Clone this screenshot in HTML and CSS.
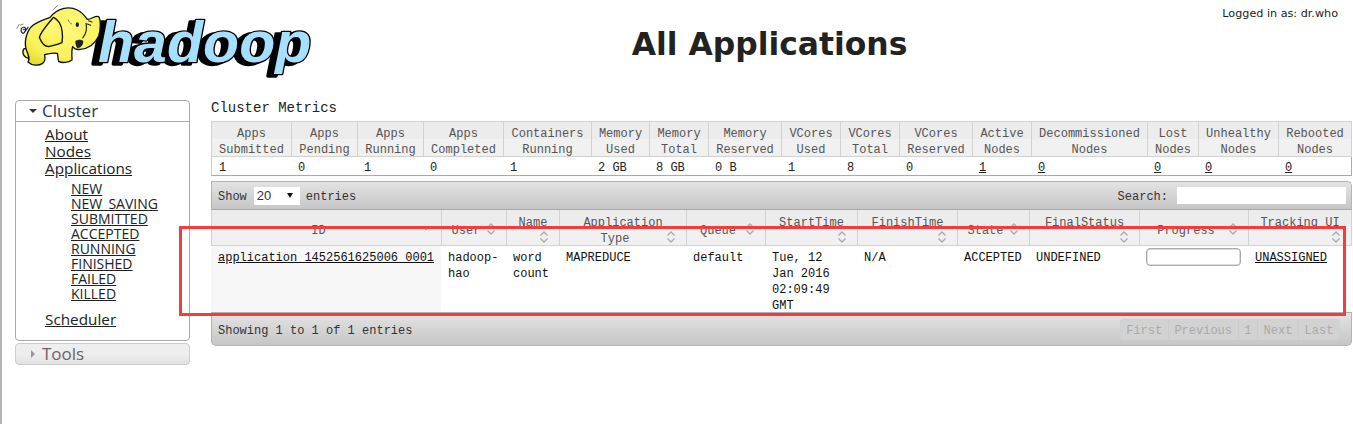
FILE: index.html
```html
<!DOCTYPE html>
<html lang="en">
<head>
<meta charset="utf-8">
<title>All Applications</title>
<link rel="stylesheet" href="styles.css">
</head>
<body>
<header class="top">
  <svg class="logo" viewBox="0 0 1020 270" aria-label="hadoop logo">
    <defs>
      <radialGradient id="skin" cx="0.55" cy="0.35" r="0.75">
        <stop offset="0" stop-color="#fdf97a"/>
        <stop offset="0.7" stop-color="#f8f25a"/>
        <stop offset="1" stop-color="#e4dc2e"/>
      </radialGradient>
    </defs>
    <text class="word-shadow" x="276" y="192" textLength="640" lengthAdjust="spacingAndGlyphs">hadoop</text>
    <text class="word" x="294" y="186" textLength="640" lengthAdjust="spacingAndGlyphs">hadoop</text>
    <path class="ele" d="M72 146C66 154 68 166 78 172C86 176 92 174 94 168L88 146Z"/>
    <path class="ele" d="M150 52C172 26 205 16 232 30C248 38 256 50 262 58C275 58 285 46 296 50C303 60 302 90 296 108C286 130 268 146 240 148C228 150 222 146 218 140C214 150 216 170 216 180C205 188 186 190 176 184C174 176 174 170 172 160C160 158 146 160 134 164C136 176 134 186 128 190C116 198 96 198 84 186C90 176 86 166 80 152C72 134 76 100 94 80C108 66 130 60 150 52Z"/>
    <path class="ele" d="M160 52C144 72 122 96 118 112C124 128 134 140 146 140C162 136 178 132 186 128C190 108 186 80 178 68C172 60 166 54 160 52Z"/>
    <path class="line" d="M84 82C76 94 70 104 66 98C60 90 64 80 74 82C80 86 74 92 70 88"/>
    <path class="thin" d="M50 86L58 72M60 76L70 72M160 28L174 16M204 58C206 66 210 70 216 72"/>
    <path class="line" d="M258 70C262 86 256 104 248 114M266 62L276 66M262 72L272 76"/>
    <path class="mouth" d="M226 124C232 118 246 118 250 124C250 136 240 146 232 144C228 140 226 132 226 124Z"/>
    <ellipse class="eye" cx="232" cy="74" rx="5" ry="7"/>
  </svg>
  <h1 class="title">All Applications</h1>
  <div class="login">Logged in as: dr.who</div>
</header>

<div class="page">
  <nav class="side">
    <section class="panel">
      <h3 class="panel-head"><span class="arrow-down"></span>Cluster</h3>
      <ul class="links">
        <li><a href="#">About</a></li>
        <li><a href="#">Nodes</a></li>
        <li><a href="#">Applications</a>
          <ul class="sublinks">
            <li><a href="#">NEW</a></li>
            <li><a href="#">NEW_SAVING</a></li>
            <li><a href="#">SUBMITTED</a></li>
            <li><a href="#">ACCEPTED</a></li>
            <li><a href="#">RUNNING</a></li>
            <li><a href="#">FINISHED</a></li>
            <li><a href="#">FAILED</a></li>
            <li><a href="#">KILLED</a></li>
          </ul>
        </li>
        <li class="sched"><a href="#">Scheduler</a></li>
      </ul>
    </section>
    <section class="tools"><span class="arrow-right"></span>Tools</section>
  </nav>

  <main class="main">
    <div class="caption">Cluster Metrics</div>
    <table class="grid metrics">
      <colgroup>
        <col class="m1"><col class="m2"><col class="m3"><col class="m4"><col class="m5"><col class="m6"><col class="m7"><col class="m8"><col class="m9"><col class="m10"><col class="m11"><col class="m12"><col class="m13"><col class="m14"><col class="m15"><col class="m16">
      </colgroup>
      <thead>
        <tr>
          <th><span class="label">Apps Submitted</span></th><th><span class="label">Apps Pending</span></th><th><span class="label">Apps Running</span></th><th><span class="label">Apps Completed</span></th><th><span class="label">Containers Running</span></th><th><span class="label">Memory Used</span></th><th><span class="label">Memory Total</span></th><th><span class="label">Memory Reserved</span></th><th><span class="label">VCores Used</span></th><th><span class="label">VCores Total</span></th><th><span class="label">VCores Reserved</span></th><th><span class="label">Active Nodes</span></th><th><span class="label">Decommissioned Nodes</span></th><th><span class="label">Lost Nodes</span></th><th><span class="label">Unhealthy Nodes</span></th><th><span class="label">Rebooted Nodes</span></th>
        </tr>
      </thead>
      <tbody>
        <tr>
          <td>1</td><td>0</td><td>1</td><td>0</td><td>1</td><td>2 GB</td><td>8 GB</td><td>0 B</td><td>1</td><td>8</td><td>0</td><td><a href="#">1</a></td><td><a href="#">0</a></td><td><a href="#">0</a></td><td><a href="#">0</a></td><td><a href="#">0</a></td>
        </tr>
      </tbody>
    </table>

    <section class="wrap">
      <div class="toolbar">
        <div class="show">Show <span class="select">20<span class="select-arrow"></span></span> entries</div>
        <label class="search">Search: <input class="search-box" type="text"></label>
      </div>
      <table class="grid apps">
        <colgroup>
          <col class="a1"><col class="a2"><col class="a3"><col class="a4"><col class="a5"><col class="a6"><col class="a7"><col class="a8"><col class="a9"><col class="a10"><col class="a11">
        </colgroup>
        <thead>
          <tr>
            <th class="pr"><span class="label">ID</span><svg class="sort mid" viewBox="0 0 10 12"><path class="tri" d="M2.500 4.500L7.500 4.500L5 7.500Z"/></svg></th>
            <th class="pr"><span class="label">User</span><svg class="sort mid" viewBox="0 0 10 12"><path d="M1.500 4.500L5 1L8.500 4.500M1.500 7.500L5 11L8.500 7.500"/></svg></th>
            <th class="tl"><span class="label">Name</span><svg class="sort low" viewBox="0 0 10 12"><path d="M1.500 4.500L5 1L8.500 4.500M1.500 7.500L5 11L8.500 7.500"/></svg></th>
            <th class="tl"><span class="label">Application<br><span class="type">Type</span></span><svg class="sort low" viewBox="0 0 10 12"><path d="M1.500 4.500L5 1L8.500 4.500M1.500 7.500L5 11L8.500 7.500"/></svg></th>
            <th class="pr"><span class="label">Queue</span><svg class="sort mid" viewBox="0 0 10 12"><path d="M1.500 4.500L5 1L8.500 4.500M1.500 7.500L5 11L8.500 7.500"/></svg></th>
            <th class="tl"><span class="label">StartTime</span><svg class="sort low" viewBox="0 0 10 12"><path d="M1.500 4.500L5 1L8.500 4.500M1.500 7.500L5 11L8.500 7.500"/></svg></th>
            <th class="tl"><span class="label">FinishTime</span><svg class="sort low" viewBox="0 0 10 12"><path d="M1.500 4.500L5 1L8.500 4.500M1.500 7.500L5 11L8.500 7.500"/></svg></th>
            <th class="pr"><span class="label">State</span><svg class="sort mid" viewBox="0 0 10 12"><path d="M1.500 4.500L5 1L8.500 4.500M1.500 7.500L5 11L8.500 7.500"/></svg></th>
            <th class="tl"><span class="label">FinalStatus</span><svg class="sort low" viewBox="0 0 10 12"><path d="M1.500 4.500L5 1L8.500 4.500M1.500 7.500L5 11L8.500 7.500"/></svg></th>
            <th class="pr"><span class="label">Progress</span><svg class="sort mid" viewBox="0 0 10 12"><path d="M1.500 4.500L5 1L8.500 4.500M1.500 7.500L5 11L8.500 7.500"/></svg></th>
            <th class="tl"><span class="label">Tracking UI</span><svg class="sort low" viewBox="0 0 10 12"><path d="M1.500 4.500L5 1L8.500 4.500M1.500 7.500L5 11L8.500 7.500"/></svg></th>
          </tr>
        </thead>
        <tbody>
          <tr>
            <td class="sorted"><a href="#">application_1452561625006_0001</a></td>
            <td>hadoop-hao</td>
            <td>word count</td>
            <td>MAPREDUCE</td>
            <td>default</td>
            <td class="narrow"><div class="lines">Tue, 12 Jan 2016 02:09:49 GMT</div></td>
            <td>N/A</td>
            <td>ACCEPTED</td>
            <td>UNDEFINED</td>
            <td><div class="progress"></div></td>
            <td><a href="#">UNASSIGNED</a></td>
          </tr>
        </tbody>
      </table>
      <div class="footer">
        <div class="info">Showing 1 to 1 of 1 entries</div>
        <div class="pager"><span>First</span><span>Previous</span><span>1</span><span>Next</span><span>Last</span></div>
      </div>
    </section>
  </main>
</div>
<div class="highlight"></div>
</body>
</html>
```

FILE: styles.css
```css
* { box-sizing: border-box; }
html, body { margin: 0; padding: 0; }
body {
  height: 424px;
  overflow: hidden;
  background: #fff;
  border-left: 2px solid #b4b4b4;
  color: #222;
  font-family: "Liberation Mono", monospace;
  font-size: 12px;
}
a { color: inherit; }

/* header */
.top {
  height: 100px;
  display: flex;
  justify-content: center;
  position: relative;
}
.logo {
  position: absolute;
  left: -2px;
  top: 0;
  width: 340px;
  height: 90px;
}
.word, .word-shadow {
  font-family: "Liberation Sans", sans-serif;
  font-weight: bold;
  font-style: italic;
  font-size: 172px;
  stroke-linejoin: round;
  paint-order: stroke;
}
.word { fill: #a6e0ff; stroke: #000; stroke-width: 8px; }
.word-shadow { fill: #000; stroke: #000; stroke-width: 10px; }
.ele { fill: url(#skin); stroke: #111; stroke-width: 4px; stroke-linejoin: round; }
.line { fill: none; stroke: #222; stroke-width: 3.500px; stroke-linecap: round; }
.thin { fill: none; stroke: #666; stroke-width: 2.500px; }
.mouth { fill: #222; }
.eye { fill: #222; }
.title {
  margin: 23px 0 0 184px;
  font-family: "DejaVu Sans", sans-serif;
  font-size: 31.400px;
  line-height: 42px;
  font-weight: bold;
  color: #222;
}
.login {
  position: absolute;
  right: 15px;
  top: 7px;
  font-family: "DejaVu Sans", sans-serif;
  font-size: 11.200px;
  line-height: 14px;
  color: #222;
}

/* page layout */
.page {
  display: grid;
  grid-template-columns: 175px 1141px;
  column-gap: 21px;
  padding-left: 13px;
}

/* sidebar */
.side { display: flex; flex-direction: column; gap: 2px; }
.panel {
  height: 241px;
  border: 1px solid #aaa;
  border-radius: 4px;
  font-family: "Open Sans", "Noto Sans", sans-serif;
}
.panel-head {
  margin: 0;
  height: 21px;
  padding-left: 13px;
  border-bottom: 1px solid #aaa;
  font-size: 17px;
  line-height: 20px;
  font-weight: normal;
  color: #2a3a4a;
  display: flex;
  align-items: center;
}
.arrow-down {
  width: 0;
  height: 0;
  margin-right: 5px;
  border-left: 4px solid transparent;
  border-right: 4px solid transparent;
  border-top: 4px solid #333;
}
.links {
  list-style: none;
  margin: 0;
  padding: 4px 0 0 29px;
  font-size: 15.300px;
  line-height: 17px;
  color: #222;
}
.sublinks {
  list-style: none;
  margin: 4px 0 0;
  padding: 0 0 0 26px;
  font-size: 14px;
  line-height: 15px;
}
.sched { margin-top: 10px; }
.tools {
  height: 22px;
  border: 1px solid #ccc;
  border-radius: 4px;
  background: linear-gradient(#eeeeee 0, #eeeeee 50%, #e2e2e2 100%);
  font-family: "Open Sans", "Noto Sans", sans-serif;
  font-size: 17px;
  line-height: 20px;
  color: #666;
  display: flex;
  align-items: center;
  padding-left: 15px;
}
.arrow-right {
  width: 0;
  height: 0;
  margin-right: 7px;
  border-top: 4px solid transparent;
  border-bottom: 4px solid transparent;
  border-left: 4px solid #999;
}

/* main */
.caption {
  font-size: 14px;
  line-height: 16px;
  height: 21px;
  color: #222;
}
.grid {
  width: 1141px;
  table-layout: fixed;
  border-collapse: separate;
  border-spacing: 0;
}
.grid th {
  position: relative;
  font-weight: normal;
  color: #555;
  text-align: center;
  vertical-align: top;
  line-height: 16px;
  border-left: 1px solid #d2d2d2;
  border-top: 1px solid #d2d2d2;
  border-bottom: 1px solid #d2d2d2;
  background: linear-gradient(#ececec 0, #ececec 50%, #f1f1f1 50%, #f0f0f0 100%);
}
.grid th:last-child { border-right: 1px solid #d2d2d2; }
.grid td { vertical-align: top; }
.label { display: block; margin-bottom: -8px; }
.type { display: inline-block; margin-right: 16px; }

.metrics th { height: 36px; padding: 4px 0 0; }
.metrics td {
  height: 19px;
  padding: 4px 7px 0;
  line-height: 14px;
  border-bottom: 1px solid #aaa;
}
.metrics td:first-child { border-left: 1px solid #ccc; }
.metrics td:last-child { border-right: 1px solid #aaa; }

.m1 { width: 80px; } .m2 { width: 66px; } .m3 { width: 66px; } .m4 { width: 80px; }
.m5 { width: 88px; } .m6 { width: 58px; } .m7 { width: 59px; } .m8 { width: 73px; }
.m9 { width: 59px; } .m10 { width: 59px; } .m11 { width: 73px; } .m12 { width: 59px; }
.m13 { width: 116px; } .m14 { width: 51px; } .m15 { width: 80px; } .m16 { width: 74px; }

.a1 { width: 230px; } .a2 { width: 65px; } .a3 { width: 53px; } .a4 { width: 127px; }
.a5 { width: 79px; } .a6 { width: 92px; } .a7 { width: 100px; } .a8 { width: 72px; }
.a9 { width: 110px; } .a10 { width: 109px; } .a11 { width: 104px; }

.wrap { margin-top: 5px; }
.toolbar, .footer {
  display: flex;
  justify-content: space-between;
  align-items: center;
  color: #333;
  background: linear-gradient(#e3e3e3, #c6c6c6);
}
.toolbar {
  height: 29px;
  padding: 2px 5px 0 6px;
  border: 1px solid #b4b4b4;
  border-bottom-color: #a8a8a8;
  border-radius: 0 5px 0 0;
}
.show { display: flex; align-items: center; }
.select {
  width: 46px;
  height: 18px;
  margin: -2px 6px 0 7px;
  padding-left: 3px;
  background: #fff;
  font-family: "Liberation Sans", sans-serif;
  font-size: 13px;
  line-height: 18px;
  color: #333;
  display: flex;
  align-items: center;
  justify-content: space-between;
}
.select-arrow {
  width: 0;
  height: 0;
  margin-right: 7px;
  border-left: 3px solid transparent;
  border-right: 3px solid transparent;
  border-top: 5px solid #111;
}
.search { display: flex; align-items: center; gap: 9px; }
.search-box {
  width: 169px;
  height: 17px;
  margin-top: -2px;
  padding: 0;
  border: 0;
  background: #fff;
}

.apps th { height: 36px; padding: 13px 0 0; border-top: 0; }
.apps th.tl { padding-top: 5px; }
.apps th.pr { padding-right: 16px; }
.apps td {
  height: 67px;
  padding: 4px 7px 0;
  line-height: 16px;
  border-bottom: 1px solid #b0b0b0;
  color: #111;
}
.apps td.narrow { padding-right: 14px; }
.lines { margin-bottom: -2px; }
.apps td.sorted { background: #f7f7f7; }

.sort {
  position: absolute;
  right: 10px;
  width: 10px;
  height: 12px;
}
.sort path { fill: none; stroke: #aaa; stroke-width: 1.300px; }
.sort .tri { fill: #999; stroke: none; }
.sort.mid { top: 13px; }
.sort.low { bottom: 2px; }

.progress {
  width: 95px;
  height: 18px;
  margin-top: -2px;
  border: 1px solid #aaa;
  border-radius: 4px;
  background: #fff;
  box-shadow: inset 0 0 0 0.500px #bbb;
}

.footer {
  height: 33px;
  padding: 0 11px 0 6px;
  border: 1px solid #b4b4b4;
  border-top: 0;
  border-radius: 0 0 5px 5px;
}
.info { padding-top: 3px; }
.pager {
  display: flex;
  height: 21px;
  border: 1px solid #d0d0d0;
  border-radius: 3px;
  background: #d2d2d2;
  color: #aaa;
  line-height: 22px;
}
.pager span { padding: 0 5.600px; border-left: 1px solid #cbcbcb; }
.pager span:first-child { border-left: 0; }

/* red annotation drawn over the screenshot */
.highlight {
  position: absolute;
  left: 179px;
  top: 226px;
  width: 1167px;
  height: 90px;
  border: 3px solid #f53b3b;
}
```
